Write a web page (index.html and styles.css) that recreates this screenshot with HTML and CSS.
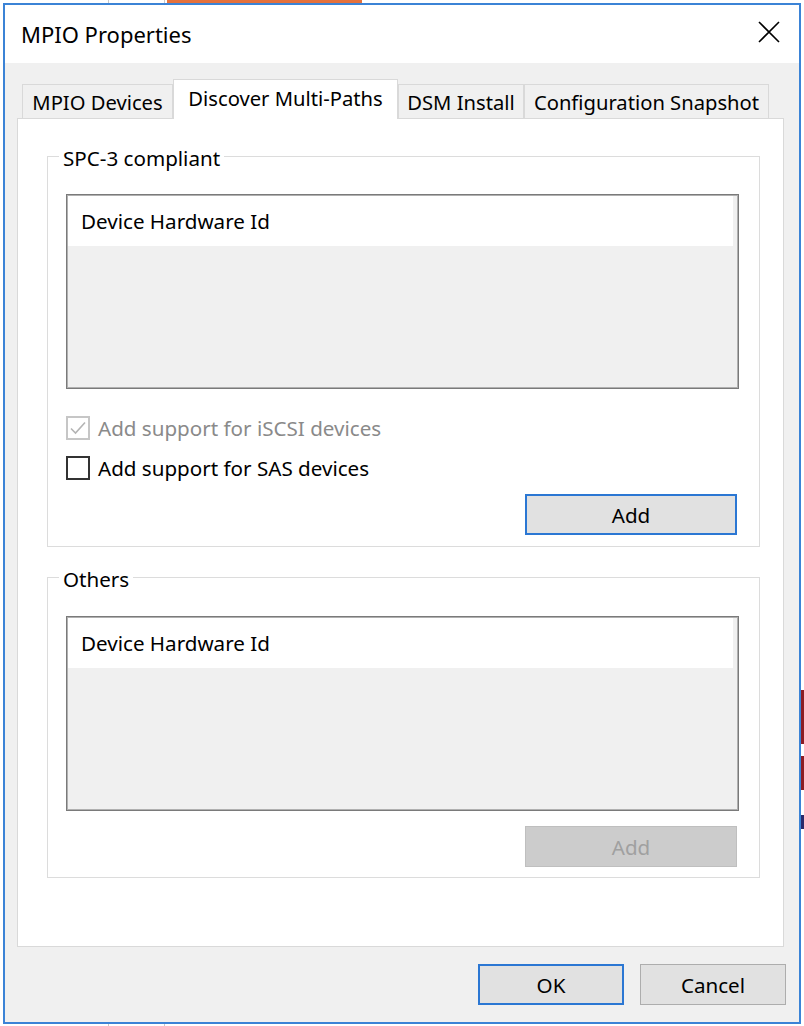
FILE: index.html
```html
<!DOCTYPE html>
<html>
<head>
<meta charset="utf-8">
<title>MPIO Properties</title>
<link rel="stylesheet" href="styles.css">
</head>
<body>
<div class="desktop">
  <div class="bg-line bg-line-a"></div>
  <div class="bg-line bg-line-b"></div>
  <div class="bg-orange"></div>
  <div class="bg-red bg-red-1"></div>
  <div class="bg-red bg-red-2"></div>
  <div class="bg-navy"></div>
  <div class="dialog">
    <div class="titlebar">
      <span class="title">MPIO Properties</span>
      <svg class="close" width="22" height="22" viewBox="0 0 22 22"><path d="M1 1L21 21M21 1L1 21" stroke="#000" stroke-width="1.6" fill="none"/></svg>
    </div>
    <div class="body">
      <div class="tabs">
        <div class="tab tab-devices">MPIO Devices</div>
        <div class="tab tab-active tab-discover">Discover Multi-Paths</div>
        <div class="tab tab-dsm">DSM Install</div>
        <div class="tab tab-config">Configuration Snapshot</div>
      </div>
      <div class="panel">
        <div class="group group-spc">
          <span class="group-label">SPC-3 compliant</span>
          <div class="listbox"><div class="list-header">Device Hardware Id</div></div>
          <div class="check check-first check-disabled">
            <span class="box"><svg width="20" height="20" viewBox="0 0 20 20"><path d="M3 10.5L7.5 15L17 4.5" stroke="#b4b4b4" stroke-width="1.6" fill="none"/></svg></span>
            <span class="check-text">Add support for iSCSI devices</span>
          </div>
          <div class="check">
            <span class="box"></span>
            <span class="check-text">Add support for SAS devices</span>
          </div>
          <div class="btn-row"><button class="btn btn-wide btn-focus">Add</button></div>
        </div>
        <div class="group group-others">
          <span class="group-label">Others</span>
          <div class="listbox"><div class="list-header">Device Hardware Id</div></div>
          <div class="btn-row btn-row-others"><button class="btn btn-wide btn-disabled">Add</button></div>
        </div>
      </div>
      <div class="footer">
        <button class="btn btn-dialog btn-focus">OK</button>
        <button class="btn btn-dialog">Cancel</button>
      </div>
    </div>
  </div>
</div>
</body>
</html>
```

FILE: styles.css
```css
html, body {
  margin: 0;
  padding: 0;
  background: #ffffff;
}

body {
  font-family: "Noto Sans", "Open Sans", sans-serif;
  font-size: 20.6px;
  color: #000;
}

.desktop {
  position: relative;
  width: 804px;
  height: 1026px;
  overflow: hidden;
  box-sizing: border-box;
  padding: 3px 0 0 3px;
}

.bg-line {
  position: absolute;
  top: 0;
  width: 1px;
  height: 1026px;
  background: #c8c8c8;
}
.bg-line-a { left: 108px; }
.bg-line-b { left: 164px; }

.bg-orange {
  position: absolute;
  top: 0;
  left: 167px;
  width: 195px;
  height: 3px;
  background: #e5713c;
}

.bg-red {
  position: absolute;
  left: 801px;
  width: 3px;
  background: #8c1c24;
}
.bg-red-1 { top: 690px; height: 54px; }
.bg-red-2 { top: 756px; height: 34px; }

.bg-navy {
  position: absolute;
  left: 801px;
  top: 815px;
  width: 3px;
  height: 14px;
  background: #2a2a6a;
}

.dialog {
  position: relative;
  width: 798px;
  height: 1021px;
  box-sizing: border-box;
  border: 2px solid #3b83d6;
  background: #f0f0f0;
  display: flex;
  flex-direction: column;
}

.titlebar {
  height: 58px;
  flex: none;
  background: #ffffff;
  display: flex;
  align-items: center;
  justify-content: space-between;
  padding: 0 19px 0 16px;
}

.title {
  font-size: 22px;
  margin-top: -1px;
}

.close {
  margin-top: -5px;
}

.body {
  flex: 1;
  padding: 16px 0 0 12px;
}

.tabs {
  display: flex;
  align-items: flex-end;
  height: 39px;
  padding-left: 5px;
  font-size: 20.2px;
}

.tab {
  box-sizing: border-box;
  height: 34px;
  border: 1px solid #d9d9d9;
  border-bottom: 0;
  background: #f0f0f0;
  display: flex;
  align-items: center;
  justify-content: center;
  white-space: nowrap;
  padding-top: 1px;
}

.tab-active {
  height: 40px;
  margin-bottom: -1px;
  background: #ffffff;
  position: relative;
  z-index: 1;
  padding-top: 0;
  padding-bottom: 3px;
}

.tab-devices { width: 151px; }
.tab-discover { width: 225px; }
.tab-dsm { width: 126px; }
.tab-config { width: 245px; }

.panel {
  width: 767px;
  height: 829px;
  box-sizing: border-box;
  border: 1px solid #d9d9d9;
  background: #ffffff;
  padding: 37px 0 0 29px;
}

.group {
  position: relative;
  box-sizing: border-box;
  width: 713px;
  border: 1px solid #dcdcdc;
  padding: 37px 0 11px 18px;
}

.group-others {
  margin-top: 30px;
  padding-top: 38px;
  padding-bottom: 10px;
}

.group-label {
  position: absolute;
  top: -13px;
  left: 11px;
  padding: 0 4px;
  line-height: 28px;
  background: #ffffff;
}

.listbox {
  box-sizing: border-box;
  width: 673px;
  height: 195px;
  border: 1px solid #7a7a7a;
  box-shadow: inset 0 0 0 1px #b0b0b0;
  background: #f0f0f0;
  padding: 1px 5px 0 1px;
}

.list-header {
  height: 50px;
  background: #ffffff;
  display: flex;
  align-items: center;
  padding-left: 13px;
}

.check {
  display: flex;
  align-items: center;
  height: 40px;
}

.check-first {
  margin-top: 19px;
}

.box {
  box-sizing: border-box;
  width: 24px;
  height: 24px;
  border: 2px solid #333333;
  background: #ffffff;
  margin-right: 8px;
  display: flex;
  align-items: center;
  justify-content: center;
}

.check-disabled .box {
  border-color: #c6c6c6;
}

.check-disabled .check-text {
  color: #8a8a8a;
}

.btn-row {
  display: flex;
  justify-content: flex-end;
  margin-top: 6px;
  padding-right: 22px;
}

.btn-row-others {
  margin-top: 15px;
}

.btn {
  box-sizing: border-box;
  height: 41px;
  font-family: inherit;
  font-size: 20.6px;
  color: #000;
  background: #e1e1e1;
  border: 1px solid #adadad;
  padding: 0;
}

.btn-wide {
  width: 212px;
}

.btn-dialog {
  width: 146px;
}

.btn-focus {
  border: 2px solid #2b77d3;
}

.btn-disabled {
  background: #cccccc;
  border-color: #bfbfbf;
  color: #a0a0a0;
}

.footer {
  display: flex;
  justify-content: flex-end;
  gap: 16px;
  margin-top: 17px;
  padding-right: 13px;
}
```
